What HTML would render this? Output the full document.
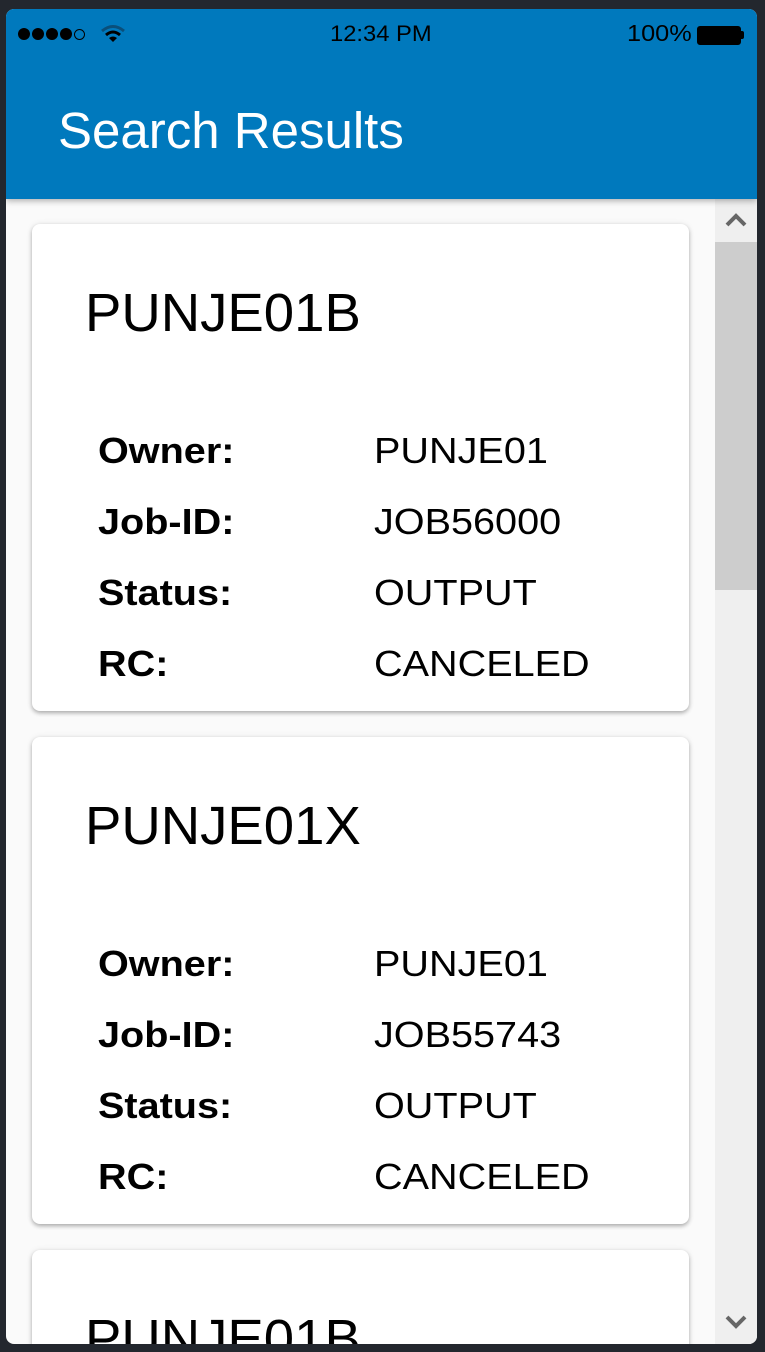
<!DOCTYPE html>
<html><head><meta charset="utf-8"><style>
*{margin:0;padding:0;box-sizing:border-box}
html,body{width:765px;height:1352px;background:#23272e;overflow:hidden;font-family:"Liberation Sans",Arial,sans-serif}
.phone{position:absolute;left:6px;top:9px;width:751px;height:1335px;border-radius:8px;overflow:hidden;background:#fafafa}
.hdr{position:absolute;left:0;top:0;width:751px;height:190px;background:#0079bd;box-shadow:0 2px 6px rgba(0,0,0,.3);z-index:2}
.time{position:absolute;left:324px;top:12px;font-size:22px;color:#000;transform:scaleX(1.08);transform-origin:left}
.batt{position:absolute;left:621px;top:11px;font-size:23px;color:#000;transform:scaleX(1.1);transform-origin:left}
.bicon{position:absolute;left:691px;top:17px;width:44px;height:19px;border:2px solid #000;border-radius:3px;background:#000}
.bnub{position:absolute;left:735px;top:22px;width:3px;height:8px;background:#000;border-radius:0 2px 2px 0}
.dots{position:absolute;left:12px;top:19px;font-size:0}
.dots span{display:inline-block;width:12px;height:12px;border-radius:50%;background:#000;margin-right:2px}
.dots span.o{background:none;border:1px solid #000;width:11px;height:11px}
.title{position:absolute;left:52px;top:92px;font-size:51px;color:#fff}
.sb{position:absolute;left:709px;top:190px;width:42px;height:1145px;background:#efefef}
.thumb{position:absolute;left:709px;top:233px;width:42px;height:348px;background:#cdcdcd}
.card{position:absolute;left:26px;width:657px;height:487px;background:#fff;border-radius:8px;box-shadow:0 2px 4px rgba(0,0,0,.3),0 0 8px rgba(0,0,0,.06)}
.ct{position:absolute;left:53px;top:58px;font-size:54px;color:#000;transform:scaleX(1.01);transform-origin:left}
.row{position:absolute;left:66px;font-size:36px;color:#000}
.row b,.row span{position:absolute;white-space:nowrap;transform:scaleX(1.1);transform-origin:left}
.row b{left:0}
.row span{left:276px}
</style></head><body>
<div class="phone">
<div class="hdr">
<div class="dots"><span></span><span></span><span></span><span></span><span class="o"></span></div>
<svg style="position:absolute;left:94px;top:15px" width="26" height="20" viewBox="0 0 26 20"><path d="M2 7 Q13 -2 24 7" stroke="#0a4f7a" stroke-width="3" fill="none"/><path d="M6 11 Q13 5 20 11" stroke="#000" stroke-width="3" fill="none"/><path d="M9 14 L13 18 L17 14 Q13 11 9 14Z" fill="#000"/></svg>
<div class="time">12:34 PM</div>
<div class="batt">100%</div><div class="bicon"></div><div class="bnub"></div>
<div class="title">Search Results</div>
</div>
<div class="sb"></div><div class="thumb"></div>
<svg style="position:absolute;left:719px;top:204px" width="22" height="16"><path d="M2 12 L11 3 L20 12" stroke="#666" stroke-width="4" fill="none"/></svg>
<svg style="position:absolute;left:719px;top:1305px" width="22" height="16"><path d="M2 3 L11 12 L20 3" stroke="#666" stroke-width="4" fill="none"/></svg>

<div class="card" style="top:215px">
<div class="ct">PUNJE01B</div>
<div class="row" style="top:206px"><b>Owner:</b><span>PUNJE01</span></div>
<div class="row" style="top:277px"><b>Job-ID:</b><span>JOB56000</span></div>
<div class="row" style="top:348px"><b>Status:</b><span>OUTPUT</span></div>
<div class="row" style="top:419px"><b>RC:</b><span>CANCELED</span></div>
</div>
<div class="card" style="top:728px">
<div class="ct">PUNJE01X</div>
<div class="row" style="top:206px"><b>Owner:</b><span>PUNJE01</span></div>
<div class="row" style="top:277px"><b>Job-ID:</b><span>JOB55743</span></div>
<div class="row" style="top:348px"><b>Status:</b><span>OUTPUT</span></div>
<div class="row" style="top:419px"><b>RC:</b><span>CANCELED</span></div>
</div>
<div class="card" style="top:1241px">
<div class="ct">PUNJE01B</div>
</div>
</div>
</body></html>
